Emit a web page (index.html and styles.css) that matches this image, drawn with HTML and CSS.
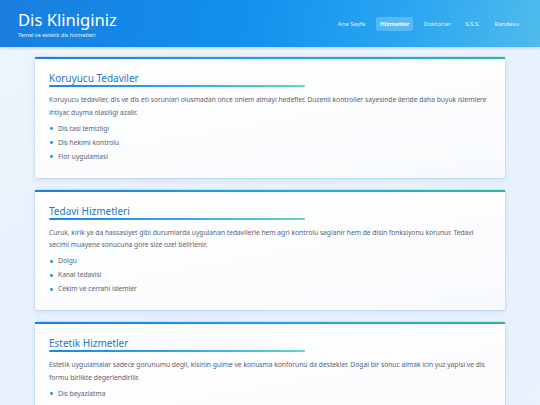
FILE: index.html
```html
<!DOCTYPE html>
<html lang="tr">
<head>
<meta charset="utf-8">
<title>Dis Kliniginiz</title>
<link rel="stylesheet" href="styles.css">
</head>
<body>
<header class="site-header">
  <div class="brand">
    <h1 class="brand-title">Dis Kliniginiz</h1>
    <p class="brand-sub">Temel ve estetik dis hizmetleri</p>
  </div>
  <nav class="nav">
    <a class="nav-link" href="#">Ana Sayfa</a>
    <a class="nav-link active" href="#">Hizmetler</a>
    <a class="nav-link" href="#">Doktorlar</a>
    <a class="nav-link" href="#">S.S.S.</a>
    <a class="nav-link" href="#">Randevu</a>
  </nav>
</header>
<main class="content">
  <section class="card">
    <h2 class="card-title">Koruyucu Tedaviler</h2>
    <p class="card-text">Koruyucu tedaviler, dis ve dis eti sorunlari olusmadan once onlem almayi hedefler. Duzenli kontroller sayesinde ileride daha buyuk islemlere ihtiyac duyma olasiligi azalir.</p>
    <ul class="card-list">
      <li>Dis tasi temizligi</li>
      <li>Dis hekimi kontrolu</li>
      <li>Flor uygulamasi</li>
    </ul>
  </section>
  <section class="card">
    <h2 class="card-title">Tedavi Hizmetleri</h2>
    <p class="card-text">Curuk, kirik ya da hassasiyet gibi durumlarda uygulanan tedavilerle hem agri kontrolu saglanir hem de disin fonksiyonu korunur. Tedavi secimi muayene sonucuna gore size ozel belirlenir.</p>
    <ul class="card-list">
      <li>Dolgu</li>
      <li>Kanal tedavisi</li>
      <li>Cekim ve cerrahi islemler</li>
    </ul>
  </section>
  <section class="card">
    <h2 class="card-title">Estetik Hizmetler</h2>
    <p class="card-text">Estetik uygulamalar sadece gorunumu degil, kisinin gulme ve konusma konforunu da destekler. Dogal bir sonuc almak icin yuz yapisi ve dis formu birlikte degerlendirilir.</p>
    <ul class="card-list">
      <li>Dis beyazlatma</li>
      <li>Zirkonyum kaplama</li>
      <li>Gulus tasarimi</li>
    </ul>
  </section>
</main>
</body>
</html>
```
FILE: styles.css
```css
* { box-sizing: border-box; }
html, body { margin: 0; padding: 0; }
body {
  font-family: "Noto Sans", "Open Sans", "DejaVu Sans", sans-serif;
  background: linear-gradient(160deg, #eef5fd 0%, #e6f1fc 60%, #e9f3fd 100%);
  color: #555d6a;
  min-height: 405px;
}
.site-header {
  height: 47px;
  background: linear-gradient(100deg, #1a7ede 0%, #1190ee 45%, #2aa6f0 75%, #4fbbec 100%);
  display: flex;
  align-items: center;
  justify-content: space-between;
  padding: 0 17px 0 18px;
  box-shadow: 0 1px 3px rgba(20, 90, 170, 0.25);
}
.brand { padding-top: 1px; }
.brand-title {
  margin: 0;
  font-weight: 400;
  font-size: 16.6px;
  line-height: 20px;
  color: #ffffff;
}
.brand-sub {
  margin: 2px 0 0;
  font-size: 5.5px;
  line-height: 7px;
  color: #e6f3ff;
}
.nav { display: flex; align-items: center; gap: 6.5px; }
.nav-link {
  font-size: 6px;
  line-height: 14px;
  padding: 0 4px;
  color: #eaf5ff;
  text-decoration: none;
  border-radius: 2px;
}
.nav-link.active {
  background: rgba(255, 255, 255, 0.22);
  font-weight: 700;
  color: #ffffff;
}
.content {
  width: 470px;
  margin: 10px auto 0;
  display: flex;
  flex-direction: column;
  gap: 12px;
}
.card {
  background: linear-gradient(170deg, #ffffff 0%, #fbfcfe 60%, #f7fafd 100%);
  border-top: 2px solid #1a7ede;
  border-image: linear-gradient(90deg, #1a7ede 0%, #22a3e6 50%, #2fba9c 100%) 1;
  border-image-slice: 1;
  border-left: 0; border-right: 0; border-bottom: 0;
  border-radius: 3px;
  padding: 12px 14px 14px;
  box-shadow: 0 2px 6px rgba(60, 110, 180, 0.14), 0 0 0 1px rgba(200, 215, 235, 0.5);
}
.card-title {
  margin: 0;
  font-size: 10px;
  line-height: 14px;
  font-weight: 400;
  color: #2577c8;
  padding-bottom: 4px;
}
.card-title::after {
  content: "";
  display: block;
  width: 256px;
  height: 2px;
  margin-top: 0;
  border-radius: 1px;
  background: linear-gradient(90deg, #2186dc 0%, #3aa7e4 55%, #62d6c2 100%);
}
.card-text {
  margin: 3px 0 0;
  font-size: 6.7px;
  line-height: 12.8px;
  color: #5a6270;
}
.card-list {
  list-style: none;
  margin: 2px 0 0;
  padding: 0;
}
.card-list li {
  font-size: 6.7px;
  line-height: 14px;
  color: #5a6270;
  padding-left: 9px;
  position: relative;
}
.card-list li::before {
  content: "";
  position: absolute;
  left: 1px;
  top: 5.6px;
  width: 2.8px;
  height: 2.8px;
  border-radius: 50%;
  background: #2a90da;
}
```
